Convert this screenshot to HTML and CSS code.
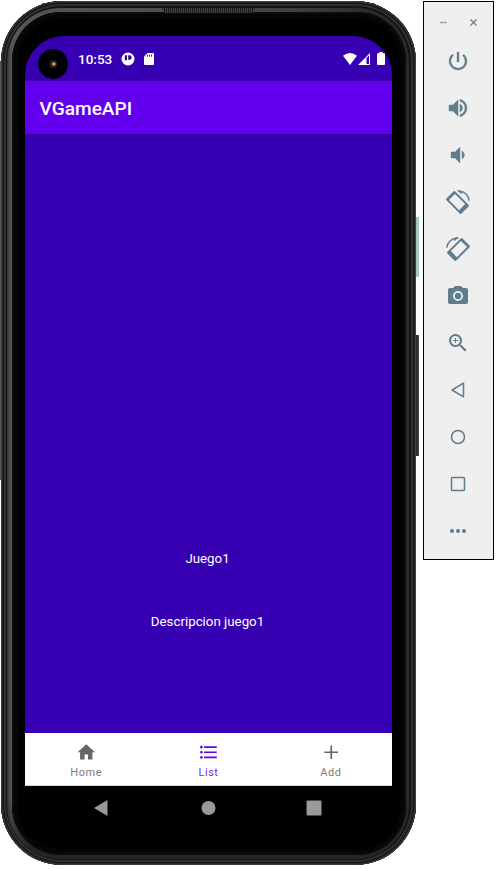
FILE: index.html
```html
<!DOCTYPE html>
<html lang="es">
<head>
<meta charset="utf-8">
<title>VGameAPI</title>
<link rel="stylesheet" href="styles.css">
</head>
<body>
<main class="stage">
  <div class="phone">
    <i class="edge"></i><i class="key power-key"></i><i class="key volume-key"></i>
    <div class="rim"><div class="bezel"></div></div>
    <i class="speaker"></i>
    <div class="screen">
      <header class="status">
        <span class="camera"><i></i></span>
        <span class="clock">10:53</span>
        <svg class="notice" viewBox="0 0 14 14"><circle cx="7" cy="7" r="6.500" fill="#fff"/><path d="M3.800 3.300h2.200v4.900H3.800zM7.200 3.300h1.300a2.200 2.200 0 0 1 0 4.400H7.200z" fill="#3700b3"/></svg>
        <svg class="sd" viewBox="0 0 10 12"><path d="M3.500 0H9q1 0 1 1v10q0 1-1 1H1q-1 0-1-1V3.500z" fill="#fff"/><path d="M3.500 1.700v2M5.500 1.700v2M7.500 1.700v2" stroke="#3700b3" stroke-width=".9"/></svg>
        <span class="signals">
          <svg width="14" height="12" viewBox="0 0 14 12"><path d="M0 2.800Q7-2.600 14 2.800L7 12z" fill="#fff"/></svg>
          <svg width="12" height="12" viewBox="0 0 12 12"><path d="M0 12 12 0v12z" fill="#fff"/><path d="M8.500 5 11 2.500V11H8.500z" fill="#3700b3"/></svg>
          <svg class="battery" width="8" height="13" viewBox="0 0 8 13"><path d="M2.300 0h3.400v1.300H7q1 0 1 1V12q0 1-1 1H1q-1 0-1-1V2.300q0-1 1-1h1.300z" fill="#fff"/></svg>
        </span>
      </header>
      <h1 class="appbar">VGameAPI</h1>
      <section class="content"><p>Juego1</p><p>Descripcion juego1</p></section>
      <nav class="tabs">
        <a class="tab"><svg viewBox="0 0 24 24"><path d="M10 20.500v-6h4v6h5.200v-8.500h3L12 2.500 1.800 12h3v8.500z"/></svg><span>Home</span></a>
        <a class="tab active"><svg viewBox="0 0 24 24"><path d="M4 10.500c-.83 0-1.500.67-1.500 1.500s.67 1.500 1.500 1.500 1.500-.67 1.500-1.500-.67-1.500-1.500-1.500zm0-6c-.83 0-1.500.67-1.500 1.500S3.170 7.500 4 7.500 5.500 6.830 5.500 6 4.830 4.500 4 4.500zm0 12c-.83 0-1.500.68-1.500 1.500s.68 1.500 1.500 1.500 1.500-.68 1.500-1.500-.67-1.500-1.500-1.500zM7 19h15v-2H7v2zm0-6h15v-2H7v2zm0-8v2h15V5H7z"/></svg><span>List</span></a>
        <a class="tab"><svg viewBox="0 0 24 24"><path d="M20 13h-7v7h-2v-7H4v-2h7V4h2v7h7v2z"/></svg><span>Add</span></a>
      </nav>
      <footer class="system">
        <svg viewBox="0 0 16 16"><path d="M1 8 14.500 0v16z"/></svg>
        <svg viewBox="0 0 16 16"><circle cx="8.500" cy="8" r="7"/></svg>
        <svg viewBox="0 0 16 16"><rect x=".5" y=".5" width="15" height="15" rx="1"/></svg>
      </footer>
    </div>
  </div>
  <aside class="controls">
    <div class="window-buttons">
      <svg width="9" height="9" viewBox="0 0 9 9"><path d="M1 4.500h7" stroke="#9aabb3" stroke-width="1.500"/></svg>
      <svg width="9" height="9" viewBox="0 0 9 9"><path d="m1.500 1.500 6 6m0-6-6 6" stroke="#607d8b" stroke-width="1.200"/></svg>
    </div>
    <svg class="tool" viewBox="0 0 24 24"><path d="M13 3h-2v10h2V3zm4.830 2.170-1.420 1.420A6.920 6.920 0 0 1 19 12a7 7 0 1 1-11.420-5.420L6.170 5.170A8.930 8.930 0 0 0 3 12a9 9 0 1 0 14.830-6.830z" stroke="#607d8b" stroke-width=".3"/></svg>
    <svg class="tool" viewBox="0 0 24 24"><path d="M3 9v6h4l5 5V4L7 9H3zm13.500 3A4.500 4.500 0 0 0 14 7.970v8.050A4.470 4.470 0 0 0 16.500 12zM14 3.230v2.060a7 7 0 0 1 0 13.420v2.060a9 9 0 0 0 0-17.540z" stroke="#607d8b" stroke-width=".5"/></svg>
    <svg class="tool" viewBox="0 0 24 24"><path d="M18.500 12A4.500 4.500 0 0 0 16 7.970v8.050A4.470 4.470 0 0 0 18.500 12zM5 9v6h4l5 5V4L9 9H5z" stroke="#607d8b" stroke-width=".4"/></svg>
    <svg class="tool" viewBox="0 0 24 24"><g id="rotate"><path transform="translate(11.500 12.500) rotate(45)" fill-rule="evenodd" d="M-9-6.300H9q1.700 0 1.700 1.700v9.200q0 1.700-1.700 1.700H-9q-1.700 0-1.700-1.700v-9.200q0-1.700 1.700-1.700zM-7.800-4.300v8.600h14.300v-8.600z"/><path d="M11.800 1h1.400c5.300.5 9.500 4.500 10 9.800" fill="none" stroke="#607d8b" stroke-width="1.400"/><path d="m11.500.4 2.400 0 2.400 2.600-1.200 1z"/></g></svg>
    <svg class="tool mirrored" viewBox="0 0 24 24"><use href="#rotate"/></svg>
    <svg class="tool" viewBox="0 0 24 24"><circle cx="12" cy="12" r="3.200"/><path d="M9 2 7.170 4H4a2 2 0 0 0-2 2v12a2 2 0 0 0 2 2h16a2 2 0 0 0 2-2V6a2 2 0 0 0-2-2h-3.170L15 2H9zm3 15a5 5 0 1 1 0-10 5 5 0 0 1 0 10z"/></svg>
    <svg class="tool" viewBox="0 0 24 24"><path d="m15.500 14-.8 0-.27-.27A6.500 6.500 0 1 0 13.730 14.430l.27.270v.8l5 5L20.500 19zM9.500 14a4.500 4.500 0 1 1 0-9 4.500 4.500 0 0 1 0 9zM9 7v2H7v1h2v2h1v-2h2V9h-2V7z"/></svg>
    <svg class="tool line" viewBox="0 0 24 24"><path d="M6 12 17.500 5.200v13.600z"/></svg>
    <svg class="tool line" viewBox="0 0 24 24"><circle cx="12" cy="12" r="6.500"/></svg>
    <svg class="tool line" viewBox="0 0 24 24"><rect x="5.500" y="5.500" width="13" height="13" rx="1"/></svg>
    <svg class="tool" viewBox="0 0 24 24"><circle cx="6" cy="12" r="2"/><circle cx="12" cy="12" r="2"/><circle cx="18" cy="12" r="2"/></svg>
  </aside>
</main>
</body>
</html>
```
FILE: styles.css
```css
* { box-sizing: border-box; }
body { margin: 0; background: #fff; font-family: Roboto, sans-serif; overflow: hidden; }
.stage { display: flex; align-items: flex-start; padding: 1px 0 0 1px; gap: 7px; }
.phone {
  position: relative; width: 415px; height: 864px; padding: 35px 24px 0;
  border-radius: 61px; background: #161716;
  box-shadow: inset 0 0 0 1px #3c3e3c, inset 0 0 0 2px #232523, inset 0 0 0 3px #161716, inset 0 0 0 5px #2f312f, inset 0 0 0 6px #101110;
}
.edge { position: absolute; left: -1px; top: 60px; width: 1px; height: 419px; background: #555; }
.key { position: absolute; left: 415px; width: 3px; }
.power-key { top: 216px; height: 60px; background: linear-gradient(90deg, #94bba7, #b9d9c7 65%, #8ea89a); }
.volume-key { top: 334px; height: 121px; background: linear-gradient(90deg, #252525, #3a3a3a 60%, #555); }
.rim {
  position: absolute; inset: 7px 7px 6px 6px; border-radius: 54px; padding: 4px 3px 4px 5px;
  background:
    linear-gradient(0deg, #242526 0, #242526 12px, rgba(36, 37, 38, 0) 60px),
    linear-gradient(90deg, #303134 0, #55565b 4px, #4c4d51 45%, #404145 70%, #292a2a 92%);
}
.bezel { height: 100%; border-radius: 49px; background: #000; box-shadow: inset 0 0 0 2px #0c0c0e, inset 0 0 0 6px #050506; }
.speaker { position: absolute; left: 161px; top: 7px; width: 93px; height: 5px; background: repeating-linear-gradient(90deg, #191919 0 1px, #444 1px 2px); clip-path: polygon(0 0, 100% 0, 98% 100%, 2% 100%); }
.screen { position: relative; width: 367px; height: 800px; display: flex; flex-direction: column; border-radius: 39px 39px 0 0; overflow: hidden; background: #000; }
.status { height: 45px; flex: none; display: flex; align-items: center; padding: 0 7px 0 13px; background: #3700b3; color: #fff; }
.camera { width: 30px; height: 30px; margin-top: 11px; border-radius: 50%; background: #000; display: grid; place-items: center; }
.camera i { width: 8px; height: 8px; border-radius: 50%; background: radial-gradient(circle at 60% 50%, #d0a58c 0 1px, #493126 2px, #1b1110 4px); }
.clock { width: 34px; margin: 1px 0 0 10px; font-size: 13.500px; line-height: 16px; font-weight: 500; }
.notice { width: 14px; height: 14px; margin-left: 9px; }
.sd { width: 10px; height: 12px; margin-left: 9px; }
.signals { display: flex; align-items: center; margin-left: auto; gap: 1px; }
.battery { margin-left: 6px; }
.appbar { flex: none; height: 53px; margin: 0; padding: 2px 0 0 14.500px; font-size: 19.100px; line-height: 51px; font-weight: 500; color: #fff; background: #6200ee; }
.content { flex: none; height: 599px; padding-top: 417px; display: flex; flex-direction: column; align-items: center; gap: 47px; background: linear-gradient(#3200a2, #3700b3 4px); color: #fff; font-size: 13.300px; line-height: 16px; }
.content p { margin: 0 2px 0 0; }
.tabs { flex: none; height: 53px; display: grid; grid-template-columns: repeat(3, 1fr); background: #fff; border-bottom: 1px solid #d8d8d8; }
.tab { display: flex; flex-direction: column; align-items: center; padding-top: 9px; color: #666; font-size: 11px; line-height: 14px; letter-spacing: .5px; }
.tab svg { width: 20.500px; height: 20.500px; fill: currentColor; margin: 0 0 3px; }
.tab span { opacity: .85; }
.active { color: #6200ee; }
.system { display: flex; justify-content: space-between; padding: 14px 70px 0 68px; }
.system svg { width: 16px; height: 16px; fill: #999; }
.controls { width: 71px; height: 559px; border: 1px solid #000; background: #efefef; display: flex; flex-direction: column; align-items: center; padding-right: 1px; }
.window-buttons { flex: none; height: 24px; margin: 16px 0 7px; display: flex; gap: 21px; }
.tool { flex: none; width: 24px; height: 24px; margin-bottom: 23px; fill: #607d8b; }
.mirrored { transform: scaleX(-1); }
.line { fill: none; stroke: #607d8b; stroke-width: 1.500; stroke-linejoin: round; }
```
